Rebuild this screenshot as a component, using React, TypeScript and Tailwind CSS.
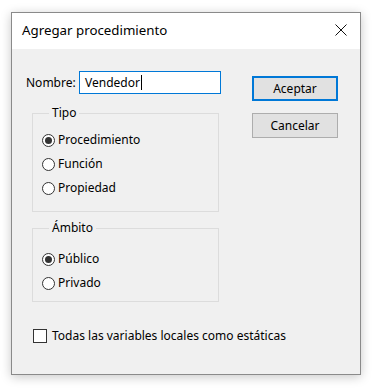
import React from "react";

const font = { fontFamily: '"Noto Sans", "Open Sans", sans-serif' };

function Radio({ label, checked }: { label: string; checked?: boolean }) {
  return (
    <div className="flex items-center h-[24px]">
      <span className="w-[13px] h-[13px] rounded-full border border-[#333333] bg-white flex items-center justify-center shrink-0">
        {checked && <span className="w-[7px] h-[7px] rounded-full bg-[#333333]" />}
      </span>
      <span className="ml-[3px] text-[12px] text-black leading-none">{label}</span>
    </div>
  );
}

export default function App() {
  return (
    <div className="w-[374px] h-[389px] bg-white pt-[12px] pl-[11px]" style={font}>
      <div className="w-[350px] h-[363px] border border-[#8a8a8a] flex flex-col shadow-[0_2px_10px_rgba(0,0,0,0.22)]">
        <div className="h-[36px] bg-white flex items-center justify-between pl-[10px] pr-[13px] shrink-0">
          <span className="text-[13.3px] text-black">Agregar procedimiento</span>
          <svg width="12" height="12" viewBox="0 0 12 12" className="-mt-[2px]">
            <path d="M0.5 0.5 L11.5 11.5 M11.5 0.5 L0.5 11.5" stroke="#111" strokeWidth="1" fill="none" />
          </svg>
        </div>
        <div className="flex-1 bg-[#f0f0f0] flex flex-row">
          <div className="w-[210px] pl-[14px] shrink-0 flex flex-col">
            <div className="mt-[22px] flex items-center h-[23px]">
              <span className="w-[53px] text-[12px] text-black">Nombre:</span>
              <div className="w-[142px] h-[23px] border border-[#0078d7] bg-white flex items-center pl-[5px]">
                <span className="text-[12px] text-black">Vendedor</span>
                <span className="w-[1px] h-[15px] bg-black ml-[1px]" />
              </div>
            </div>
            <fieldset className="mt-[11px] ml-[6px] w-[187px] border border-[#dcdcdc] pl-[9px] pt-[7px] pb-[11px]">
              <legend className="ml-[7px] px-[3px] text-[12px] leading-[16px] text-black">Tipo</legend>
              <Radio label="Procedimiento" checked />
              <Radio label="Función" />
              <Radio label="Propiedad" />
            </fieldset>
            <fieldset className="mt-[8px] ml-[6px] w-[187px] border border-[#dcdcdc] pl-[9px] pt-[11px] pb-[6px]">
              <legend className="ml-[7px] px-[3px] text-[12px] leading-[16px] text-black">Ámbito</legend>
              <Radio label="Público" checked />
              <Radio label="Privado" />
            </fieldset>
            <div className="mt-[22px] ml-[7px] flex items-center h-[24px] whitespace-nowrap">
              <span className="w-[14px] h-[14px] border border-[#333333] bg-white shrink-0" />
              <span className="ml-[5px] text-[12px] text-black">Todas las variables locales como estáticas</span>
            </div>
          </div>
          <div className="ml-[30px] pt-[27px] flex flex-col gap-[12px]">
            <button className="w-[86px] h-[25px] border-2 border-[#0078d7] bg-[#e1e1e1] text-[12px] text-black flex items-center justify-center">
              Aceptar
            </button>
            <button className="w-[86px] h-[25px] border border-[#adadad] bg-[#e1e1e1] text-[12px] text-black flex items-center justify-center">
              Cancelar
            </button>
          </div>
        </div>
      </div>
    </div>
  );
}
